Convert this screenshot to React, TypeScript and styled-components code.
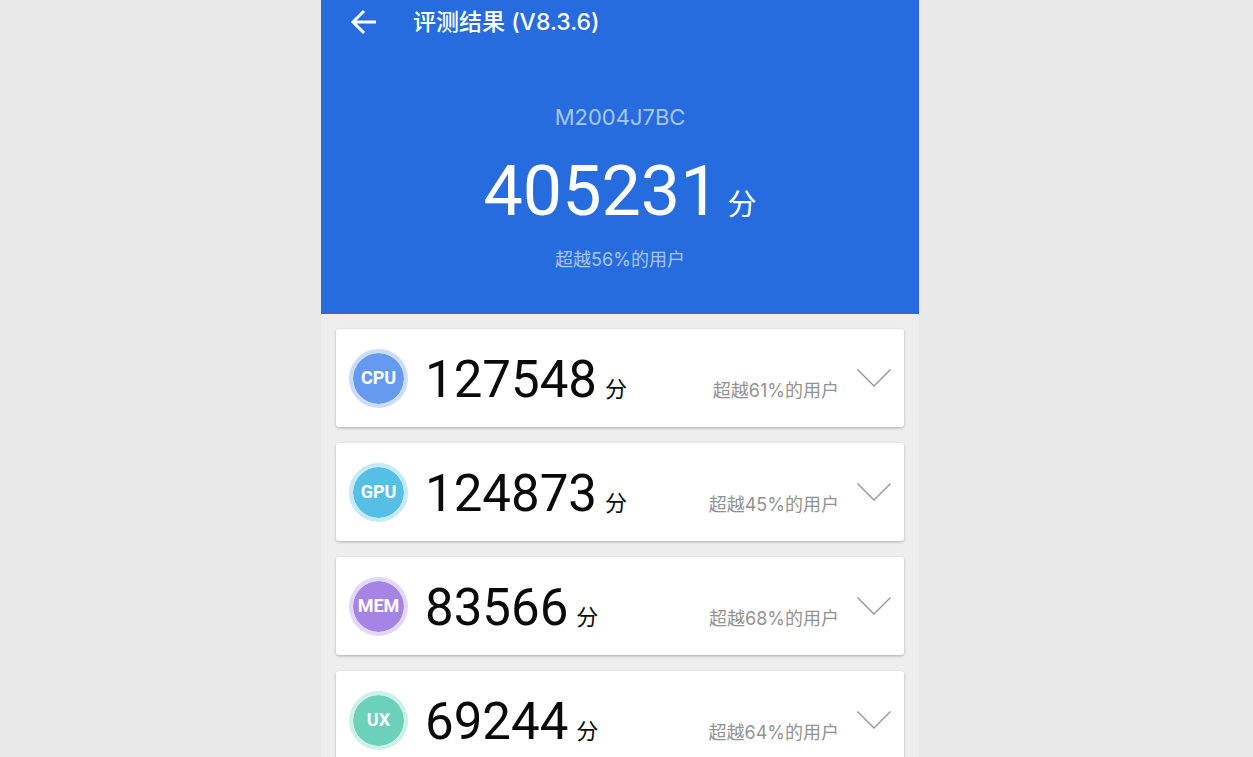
import React from 'react';
import styled, { createGlobalStyle } from 'styled-components';

const GlobalStyle = createGlobalStyle`
  *, *::before, *::after { box-sizing: border-box; }
  body {
    margin: 0;
    background: #e8e8e8;
    font-family: Inter, 'Noto Sans CJK SC', sans-serif;
  }
`;

const Page = styled.div`
  display: grid;
  grid-template-columns: minmax(0, 321fr) minmax(360px, 598fr) minmax(0, 334fr);
  height: 100vh;
`;

const Screen = styled.main`
  grid-column: 2;
  display: flex;
  flex-direction: column;
  min-height: 0;
  background: #eeeeee;
`;

const Hero = styled.header`
  flex: none;
  display: flex;
  flex-direction: column;
  padding-bottom: 39px;
  background: #266cde;
  color: #ffffff;
`;

const TopBar = styled.div`
  display: flex;
  align-items: center;
  gap: 34px;
  height: 44px;
  padding-left: 28px;
`;

const IconButton = styled.button`
  display: flex;
  flex: none;
  align-items: center;
  justify-content: center;
  padding: 0;
  border: 0;
  background: none;
  color: inherit;
  cursor: pointer;
`;

const Title = styled.h1`
  margin: 0;
  font-size: 23px;
  line-height: 32px;
  font-weight: 500;
  white-space: pre;
`;

const Summary = styled.div`
  display: flex;
  flex-direction: column;
  align-items: center;
  padding-top: 57px;
`;

const Device = styled.p`
  margin: 0;
  font-size: 22px;
  line-height: 32px;
  color: #a9c6f5;
`;

const Total = styled.p`
  display: flex;
  align-items: baseline;
  gap: 8px;
  margin: 0;
  padding-top: 4px;
  font-family: Roboto, 'Noto Sans CJK SC', sans-serif;
  font-size: 70px;
  line-height: 108px;
`;

const Rank = styled.p<{ $light?: boolean }>`
  margin: 0;
  font-size: 18px;
  line-height: 30px;
  color: ${(p) => (p.$light ? '#a9c6f5' : '#929292')};
  white-space: nowrap;
`;

const Unit = styled.span<{ $large?: boolean }>`
  font-size: ${(p) => (p.$large ? 29 : 22)}px;
  line-height: 32px;
`;

const List = styled.ul`
  flex: 1;
  display: flex;
  flex-direction: column;
  gap: 16px;
  min-height: 0;
  margin: 0;
  padding: 15px;
  overflow-y: auto;
  scrollbar-width: none;
  list-style: none;
`;

const Card = styled.li`
  flex: none;
  display: flex;
  align-items: center;
  height: 98px;
  padding: 0 12px 0 13px;
  border-radius: 3px;
  background: #ffffff;
  box-shadow: 0 1px 3px rgba(0, 0, 0, 0.28);
`;

const Badge = styled.span<{ $fill: string; $ring: string }>`
  flex: none;
  display: flex;
  align-items: center;
  justify-content: center;
  width: 59px;
  height: 59px;
  border: 4px solid ${(p) => p.$ring};
  border-radius: 50%;
  background: ${(p) => p.$fill};
  background-clip: padding-box;
  color: #ffffff;
  font-family: Roboto, sans-serif;
  font-size: 18px;
  line-height: 24px;
  font-weight: 700;
`;

const Score = styled.p`
  flex: 1;
  display: flex;
  align-items: baseline;
  gap: 8px;
  margin: 0 0 0 17px;
  padding-top: 4px;
  color: #0a0a0a;
  font-family: Roboto, 'Noto Sans CJK SC', sans-serif;
  font-size: 51px;
  line-height: 72px;
`;

const CardRank = styled(Rank)`
  margin: 26px 17px 0 0;
`;

const results = [
  { name: 'CPU', score: 127548, percent: 61, fill: '#6699f0', ring: '#cbdcf8' },
  { name: 'GPU', score: 124873, percent: 45, fill: '#56bfe6', ring: '#c6e9f6' },
  { name: 'MEM', score: 83566, percent: 68, fill: '#a684e5', ring: '#e1d7f6' },
  { name: 'UX', score: 69244, percent: 64, fill: '#6bd1bb', ring: '#cff0e8' },
];

export default function App() {
  return (
    <>
      <GlobalStyle />
      <Page>
        <Screen>
          <Hero>
            <TopBar>
              <IconButton type="button" aria-label="返回">
                <svg width="30" height="30" viewBox="0 0 30 30" fill="none" stroke="currentColor" strokeWidth="3">
                  <path d="M27 15H4.500M15 4L4 15L15 26" />
                </svg>
              </IconButton>
              <Title>评测结果 (V8.3.6)</Title>
            </TopBar>
            <Summary>
              <Device>M2004J7BC</Device>
              <Total>
                405231<Unit $large>分</Unit>
              </Total>
              <Rank $light>超越56%的用户</Rank>
            </Summary>
          </Hero>
          <List>
            {results.map((r) => (
              <Card key={r.name}>
                <Badge $fill={r.fill} $ring={r.ring}>{r.name}</Badge>
                <Score>
                  {r.score}
                  <Unit>分</Unit>
                </Score>
                <CardRank>超越{r.percent}%的用户</CardRank>
                <IconButton type="button" aria-label={`展开 ${r.name}`}>
                  <svg width="36" height="20" viewBox="0 0 36 20" fill="none" stroke="#969696" strokeWidth="1.4">
                    <path d="M1.5 1.5L18 18L34.500 1.500" />
                  </svg>
                </IconButton>
              </Card>
            ))}
          </List>
        </Screen>
      </Page>
    </>
  );
}
